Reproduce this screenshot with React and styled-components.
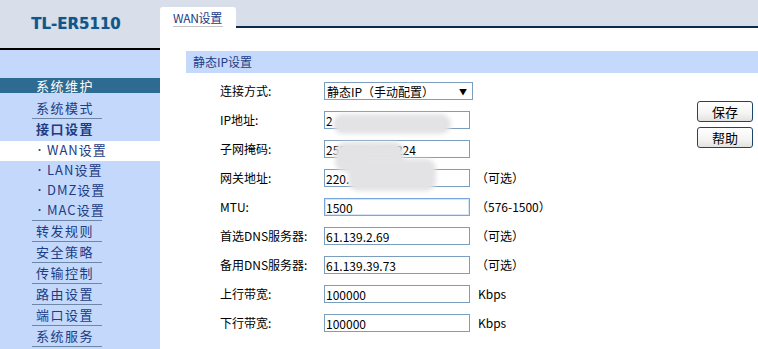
import React from 'react'
import styled, { createGlobalStyle } from 'styled-components';

const Global = createGlobalStyle`
  body {
    margin: 0;
    background: #fff;
    font-family: "Noto Sans CJK SC", "DejaVu Sans", sans-serif;
  }
`;

const Page = styled.div`
  display: flex;
  width: 758px;
  height: 349px;
  overflow: hidden;
`;

const Sidebar = styled.div`
  width: 160px;
  flex-shrink: 0;
  background: #c3d8fb;
`;

const Brand = styled.div`
  height: 48px;
  background: #d8dfea;
  border-bottom: 2px solid #000;
  display: flex;
  align-items: center;
  justify-content: center;
  padding-right: 8px;
  font-family: "DejaVu Sans", sans-serif;
  font-weight: bold;
  font-size: 15px;
  color: #12558a;
  text-shadow: 0 0 1px rgba(18, 85, 138, 0.4);
`;

const Menu = styled.div`
  padding-top: 28px;
`;

const Heading = styled.div`
  height: 15px;
  line-height: 15px;
  background: #2e6b93;
  color: #fff;
  padding-left: 36px;
  font-size: 13px;
  letter-spacing: 1.5px;
  margin-bottom: 5px;
`;

const Item = styled.div`
  height: ${props => props.$h}px;
  background: ${props => props.$active ? '#fff' : 'transparent'};
`;

const ItemLabel = styled.div`
  box-sizing: border-box;
  margin-left: 32px;
  width: 70px;
  height: 100%;
  padding-left: ${props => props.$sub ? 3 : 4}px;
  padding-bottom: 2px;
  border-bottom: 1px solid ${props => props.$sep ? '#6d87a6' : 'transparent'};
  display: flex;
  align-items: center;
  font-size: 13px;
  letter-spacing: ${props => props.$sub ? 1 : 1.5}px;
  font-weight: ${props => props.$bold ? 'bold' : 'normal'};
  color: #1c3c84;
  white-space: nowrap;
`;

const Bullet = styled.span`
  font-size: 9px;
  margin-right: 2px;
`;

const Main = styled.div`
  flex: 1;
  background: #fff;
`;

const TabBar = styled.div`
  height: 19px;
  padding-top: 7px;
  background: #d8dfea;
  border-bottom: 2px solid #0d2c4c;
  display: flex;
  align-items: flex-end;
`;

const Tab = styled.div`
  width: 76px;
  height: 21px;
  margin-bottom: -2px;
  box-sizing: border-box;
  background: #fff;
  border-radius: 3px 3px 0 0;
  padding-left: 13px;
  display: flex;
  align-items: flex-end;
`;

const TabText = styled.span`
  width: 50px;
  border-bottom: 1px solid #c4c4c4;
  margin-bottom: 1px;
  font-size: 12px;
  line-height: 17px;
  letter-spacing: -0.3px;
  white-space: nowrap;
  color: #1b3b86;
`;

const Content = styled.div`
  padding: 23px 0 0 26px;
`;

const Section = styled.div`
  height: 22px;
  line-height: 22px;
  background: #c5d9fc;
  padding-left: 7px;
  font-size: 12px;
  color: #1d3d85;
`;

const Body = styled.div`
  display: flex;
  justify-content: space-between;
`;

const Form = styled.div`
  padding: 9px 0 0 34px;
`;

const Row = styled.div`
  display: flex;
  align-items: flex-start;
  height: 29px;
`;

const Label = styled.div`
  width: 104px;
  line-height: 18px;
  font-size: 12px;
  color: #000;
`;

const Field = styled.div`
  position: relative;
  width: 146px;
  height: 18px;
`;

const Input = styled.input`
  display: block;
  box-sizing: border-box;
  width: 100%;
  height: 18px;
  margin: 0;
  padding: 0 1px;
  border: 1px solid ${props => props.$focus ? '#78a6e0' : '#7b9dbe'};
  box-shadow: ${props => props.$focus ? 'inset 0 0 0 1px #d6e5f8' : 'none'};
  outline: none;
  font-family: "Noto Sans CJK SC", "DejaVu Sans", sans-serif;
  font-size: 12px;
  color: #000;
  background: #fff;
`;

const Smudge = styled.div`
  position: absolute;
  z-index: 2;
  left: ${props => props.$x}px;
  top: ${props => props.$y}px;
  width: ${props => props.$w}px;
  height: ${props => props.$hh}px;
  background: #e3e3e6;
  border-radius: 10px;
  filter: blur(2px);
`;

const Select = styled.div`
  box-sizing: border-box;
  width: 149px;
  height: 18px;
  border: 1px solid #7b9dbe;
  display: flex;
  align-items: center;
  justify-content: space-between;
  padding: 0 5px 0 2px;
  font-size: 12px;
  color: #000;
`;

const Arrow = styled.span`
  font-size: 8px;
`;

const Suffix = styled.div`
  margin-left: ${props => props.$ml}px;
  line-height: 18px;
  font-size: 12px;
  color: #000;
  white-space: nowrap;
`;

const Actions = styled.div`
  padding: 28px 5px 0 0;
  display: flex;
  flex-direction: column;
  gap: 5px;
`;

const Button = styled.button`
  width: 56px;
  height: 21px;
  padding: 0;
  border: 1px solid #1d4570;
  border-radius: 3px;
  background: linear-gradient(#ffffff, #f4f4f2 60%, #e2e2de);
  font-family: "Noto Sans CJK SC", sans-serif;
  font-size: 13px;
  color: #000;
  cursor: pointer;
`;

const menu = [
  { text: '系统模式', h: 21, sep: true },
  { text: '接口设置', h: 22, bold: true },
  { text: 'WAN设置', h: 20, sub: true, active: true },
  { text: 'LAN设置', h: 20, sub: true },
  { text: 'DMZ设置', h: 20, sub: true },
  { text: 'MAC设置', h: 20, sub: true, sep: true },
  { text: '转发规则', h: 21, sep: true },
  { text: '安全策略', h: 21, sep: true },
  { text: '传输控制', h: 21, sep: true },
  { text: '路由设置', h: 21, sep: true },
  { text: '端口设置', h: 21, sep: true },
  { text: '系统服务', h: 21, sep: true },
];

const fields = [
  { label: 'IP地址:', value: '2', smudge: { $x: 9, $y: 3, $w: 118, $hh: 20 } },
  { label: '子网掩码:', value: '255.255.255.224', smudge: { $x: 11, $y: 2, $w: 69, $hh: 30 } },
  { label: '网关地址:', value: '220.', suffix: '（可选）', smudge: { $x: 24, $y: -10, $w: 88, $hh: 32 } },
  { label: 'MTU:', value: '1500', suffix: '（576-1500）', focus: true },
  { label: '首选DNS服务器:', value: '61.139.2.69', suffix: '（可选）' },
  { label: '备用DNS服务器:', value: '61.139.39.73', suffix: '（可选）' },
  { label: '上行带宽:', value: '100000', suffix: 'Kbps', kbps: true },
  { label: '下行带宽:', value: '100000', suffix: 'Kbps', kbps: true },
];

const App = () => {
  return (
    <Page>
      <Global />
      <Sidebar>
        <Brand>TL-ER5110</Brand>
        <Menu>
          <Heading>系统维护</Heading>
          {menu.map(m => (
            <Item key={m.text} $h={m.h} $active={m.active}>
              <ItemLabel $sep={m.sep} $sub={m.sub} $bold={m.bold}>
                {m.sub && <Bullet>•</Bullet>}
                {m.text}
              </ItemLabel>
            </Item>
          ))}
        </Menu>
      </Sidebar>
      <Main>
        <TabBar>
          <Tab><TabText>WAN设置</TabText></Tab>
        </TabBar>
        <Content>
          <Section>静态IP设置</Section>
          <Body>
            <Form>
              <Row>
                <Label>连接方式:</Label>
                <Select>
                  <span>静态IP（手动配置）</span>
                  <Arrow>▼</Arrow>
                </Select>
              </Row>
              {fields.map(f => (
                <Row key={f.label}>
                  <Label>{f.label}</Label>
                  <Field>
                    <Input defaultValue={f.value} $focus={f.focus} readOnly />
                    {f.smudge && <Smudge {...f.smudge} />}
                  </Field>
                  {f.suffix && <Suffix $ml={f.kbps ? 8 : 6}>{f.suffix}</Suffix>}
                </Row>
              ))}
            </Form>
            <Actions>
              <Button>保存</Button>
              <Button>帮助</Button>
            </Actions>
          </Body>
        </Content>
      </Main>
    </Page>
  )
}

export default App
